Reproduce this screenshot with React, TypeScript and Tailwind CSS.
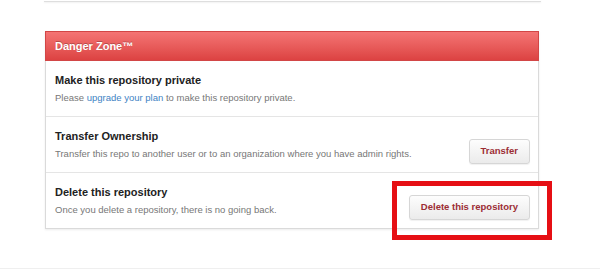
import React from 'react';

const font = { fontFamily: '"Liberation Sans", Arial, sans-serif' };

interface ZoneRowProps {
  title: string;
  children: React.ReactNode;
  action?: string;
  last?: boolean;
}

const ZoneRow: React.FC<ZoneRowProps> = ({ title, children, action, last }) => (
  <div
    className={`flex items-start justify-between pl-[9px] pr-[8px] pt-[11px] pb-[10px] ${
      last ? '' : 'border-b border-[#e5e5e5]'
    }`}
  >
    <div>
      <div className="text-[11px] leading-[16px] font-bold text-[#222]">{title}</div>
      <div className="mt-[2px] text-[9.5px] leading-[16px] text-[#777]">{children}</div>
    </div>
    {action && (
      <button className="mt-[11px] -mb-[4px] h-[25px] px-[11px] rounded-[3px] border border-[#d6d6d6] bg-gradient-to-b from-[#fdfdfd] to-[#ebebeb] text-[9.5px] font-bold text-[#9c2d34] shadow-[0_1px_1px_rgba(0,0,0,0.06)]">
        {action}
      </button>
    )}
  </div>
);

export default function App() {
  return (
    <div className="relative w-[600px] h-[271px] overflow-hidden bg-white" style={font}>
      {/* bottom of the previous box */}
      <div className="ml-[44px] w-[497px] h-[2px] border-b border-[#dedede] shadow-[0_1px_2px_rgba(0,0,0,0.06)]" />

      {/* Danger zone */}
      <div className="ml-[45px] mt-[29px] w-[494px] border border-[#dadada] border-t-0 shadow-[0_1px_2px_rgba(0,0,0,0.08)]">
        <div className="h-[30px] flex items-center px-[9px] bg-gradient-to-b from-[#f47474] to-[#dc4242] border border-[#d24646] -mx-px text-[11px] font-bold text-white [text-shadow:0_-1px_0_rgba(0,0,0,0.25)]">
          Danger Zone™
        </div>

        <ZoneRow title="Make this repository private">
          Please <span className="text-[#4183c4]">upgrade your plan</span> to make this repository private.
        </ZoneRow>
        <ZoneRow title="Transfer Ownership" action="Transfer">
          Transfer this repo to another user or to an organization where you have admin rights.
        </ZoneRow>
        <ZoneRow title="Delete this repository" action="Delete this repository" last>
          Once you delete a repository, there is no going back.
        </ZoneRow>
      </div>

      {/* red highlight annotation */}
      <div className="absolute left-[392px] top-[181px] w-[160px] h-[59px] border-[5px] border-[#e60f14]" />

      {/* footer line */}
      <div className="absolute left-0 top-[268px] w-[600px] border-t border-[#efefef]" />
    </div>
  );
}
